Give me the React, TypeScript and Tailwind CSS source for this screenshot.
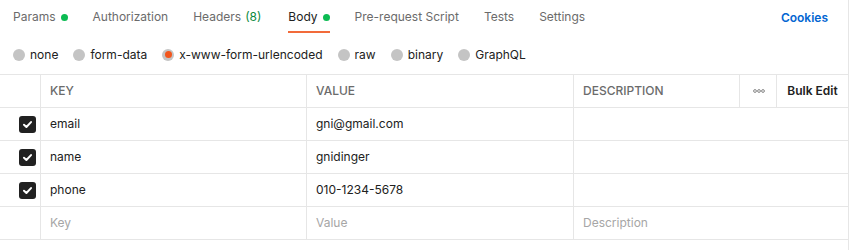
import React from 'react';

const tabs = [
  { label: 'Params', dot: true },
  { label: 'Authorization' },
  { label: 'Headers', count: '(8)' },
  { label: 'Body', dot: true, active: true },
  { label: 'Pre-request Script' },
  { label: 'Tests' },
  { label: 'Settings' },
];

const bodyTypes = ['none', 'form-data', 'x-www-form-urlencoded', 'raw', 'binary', 'GraphQL'];

const rows = [
  { key: 'email', value: 'gni@gmail.com' },
  { key: 'name', value: 'gnidinger' },
  { key: 'phone', value: '010-1234-5678' },
];

const Check = () => (
  <div className="w-[17px] h-[17px] rounded-[3px] bg-[#212121] flex items-center justify-center">
    <svg width="11" height="11" viewBox="0 0 10 10" fill="none">
      <path d="M1.8 5.2L4 7.3L8.2 2.8" stroke="white" strokeWidth="1.8" strokeLinecap="round" strokeLinejoin="round" />
    </svg>
  </div>
);

const Dots = () => (
  <svg width="12" height="4" viewBox="0 0 12 4" fill="none" stroke="#6b6b6b" strokeWidth="0.8">
    <circle cx="2" cy="2" r="1.4" />
    <circle cx="6" cy="2" r="1.4" />
    <circle cx="10" cy="2" r="1.4" />
  </svg>
);

export default function App() {
  return (
    <div className="w-[849px] h-[250px] bg-white border-r border-[#e6e6e6] text-[12px] text-[#212121]" style={{ fontFamily: 'Inter, "Noto Sans", sans-serif' }}>
      {/* Tabs */}
      <div className="flex items-start justify-between h-[33px] pl-[13px] pr-[20px]">
        <div className="flex gap-[25px]">
          {tabs.map((t) => (
            <div key={t.label} className={`flex items-center h-[33px] pt-[3px] border-b-2 ${t.active ? 'ml-[2px] border-[#f26b3a] text-[#212121]' : 'border-transparent text-[#6b6b6b]'}`}>
              <span>{t.label}</span>
              {t.count && <span className="ml-[4px] text-[#0b8a3e]">{t.count}</span>}
              {t.dot && <span className="ml-[5px] w-[7px] h-[7px] rounded-full bg-[#0cbb52]" />}
            </div>
          ))}
        </div>
        <div className="h-[33px] flex items-center pt-[3px] font-semibold text-[#0265d2]">Cookies</div>
      </div>

      {/* Body types */}
      <div className="flex items-center gap-[15px] h-[41px] pt-[2px] pl-[13px]">
        {bodyTypes.map((b) => (
          <label key={b} className="flex items-center gap-[5px]">
            <span className="w-[12px] h-[12px] rounded-full bg-[#c4c4c4] flex items-center justify-center">
              {b === 'x-www-form-urlencoded' && <span className="w-[7px] h-[7px] rounded-full bg-[#f2561d]" />}
            </span>
            <span>{b}</span>
          </label>
        ))}
      </div>

      {/* Table */}
      <div className="border-t border-[#e6e6e6]">
        <div className="grid grid-cols-[41px_266px_267px_166px_37px_71px] h-[33px] border-b border-[#e6e6e6] text-[12px] text-[#6b6b6b] font-medium">
          <div className="border-r border-[#e6e6e6]" />
          <div className="flex items-center px-[9px] border-r border-[#e6e6e6]">KEY</div>
          <div className="flex items-center px-[9px] border-r border-[#e6e6e6]">VALUE</div>
          <div className="flex items-center px-[9px] border-r border-[#e6e6e6]">DESCRIPTION</div>
          <div className="flex items-center justify-center pl-[2px] border-r border-[#e6e6e6]">
            <Dots />
          </div>
          <div className="flex items-center justify-center font-semibold text-[#212121]">Bulk Edit</div>
        </div>
        {rows.map((r) => (
          <div key={r.key} className="grid grid-cols-[41px_266px_267px_274px] h-[33px] border-b border-[#e6e6e6]">
            <div className="flex items-center justify-center pl-[15px] border-r border-[#e6e6e6]">
              <Check />
            </div>
            <div className="flex items-center px-[9px] border-r border-[#e6e6e6]">{r.key}</div>
            <div className="flex items-center px-[9px] border-r border-[#e6e6e6]">{r.value}</div>
            <div />
          </div>
        ))}
        <div className="grid grid-cols-[41px_266px_267px_274px] h-[33px] border-b border-[#e6e6e6] text-[#a6a6a6]">
          <div className="border-r border-[#e6e6e6]" />
          <div className="flex items-center px-[9px] border-r border-[#e6e6e6]">Key</div>
          <div className="flex items-center px-[9px] border-r border-[#e6e6e6]">Value</div>
          <div className="flex items-center px-[9px]">Description</div>
        </div>
      </div>
    </div>
  );
}
